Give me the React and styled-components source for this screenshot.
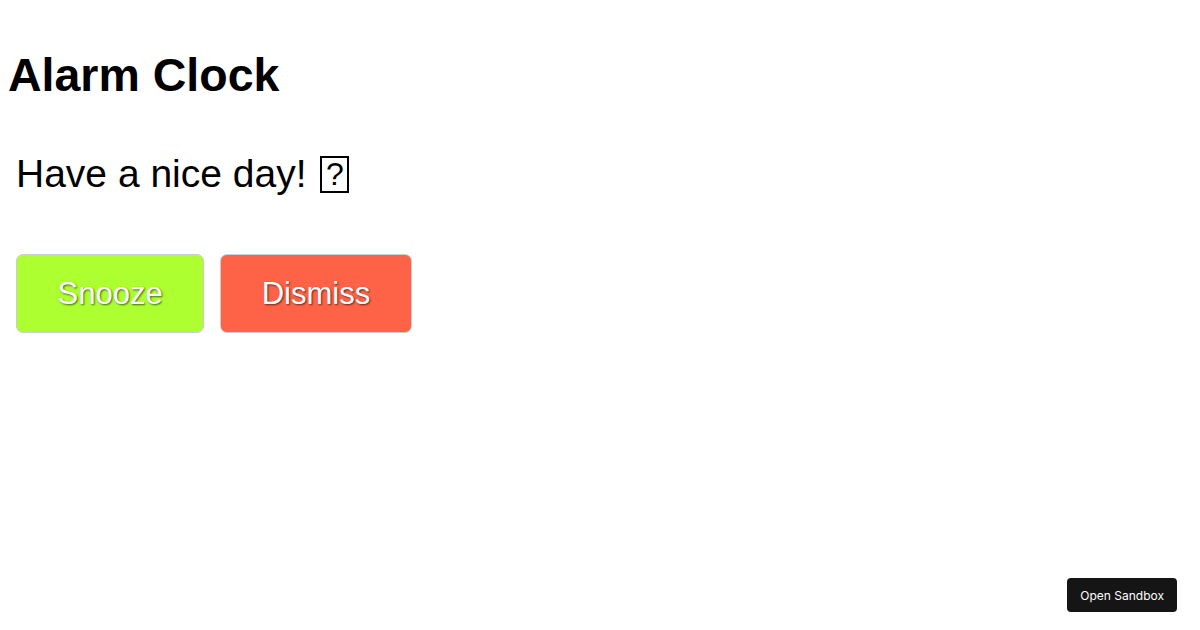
import React from "react";
import styled, { createGlobalStyle } from "styled-components";

const GlobalStyle = createGlobalStyle`
  html, body {
    margin: 0;
    padding: 0;
    background: #fff;
  }
  body {
    font-family: "Liberation Sans", Arial, sans-serif;
    color: #000;
  }
`;

const Page = styled.div`
  padding: 0 8px;
`;

const Title = styled.h1`
  font-size: 46.5px;
  font-weight: bold;
  margin: 48px 0 0;
`;

const Message = styled.p`
  font-size: 39px;
  margin: 50px 8px 58px;
`;

/* the emoji shows up as a missing-glyph box in the shot */
const Missing = styled.span`
  display: inline-block;
  box-sizing: border-box;
  width: 29px;
  height: 37px;
  margin-left: 3px;
  border: 2px solid #000;
  font-size: 32px;
  line-height: 33px;
  text-align: center;
  vertical-align: 2px;
`;

const Actions = styled.div`
  display: flex;
  gap: 16px;
  padding: 0 8px;
`;

const ActionButton = styled.button`
  font-family: "Liberation Sans", Arial, sans-serif;
  font-size: 31px;
  color: #fff;
  text-shadow: 1px 1px 2px rgba(0, 0, 0, 0.6);
  background: ${(p) => p.$bg};
  border: 1px solid #ccc;
  border-radius: 7px;
  height: 79px;
  padding: 0 40.5px;
  cursor: pointer;
`;

const SandboxLink = styled.a`
  position: fixed;
  right: 23px;
  bottom: 18px;
  display: flex;
  align-items: center;
  height: 34px;
  padding: 0 13px;
  background: #151515;
  color: #fff;
  border-radius: 4px;
  font-family: "Inter", "Liberation Sans", sans-serif;
  font-size: 12px;
  text-decoration: none;
`;

export default function App() {
  return (
    <>
      <GlobalStyle />
      <Page>
        <Title>Alarm Clock</Title>
        <Message>
          Have a nice day! <Missing>?</Missing>
        </Message>
        <Actions>
          <ActionButton $bg="#adff2f">Snooze</ActionButton>
          <ActionButton $bg="#ff6347">Dismiss</ActionButton>
        </Actions>
      </Page>
      <SandboxLink href="#">Open Sandbox</SandboxLink>
    </>
  );
}
